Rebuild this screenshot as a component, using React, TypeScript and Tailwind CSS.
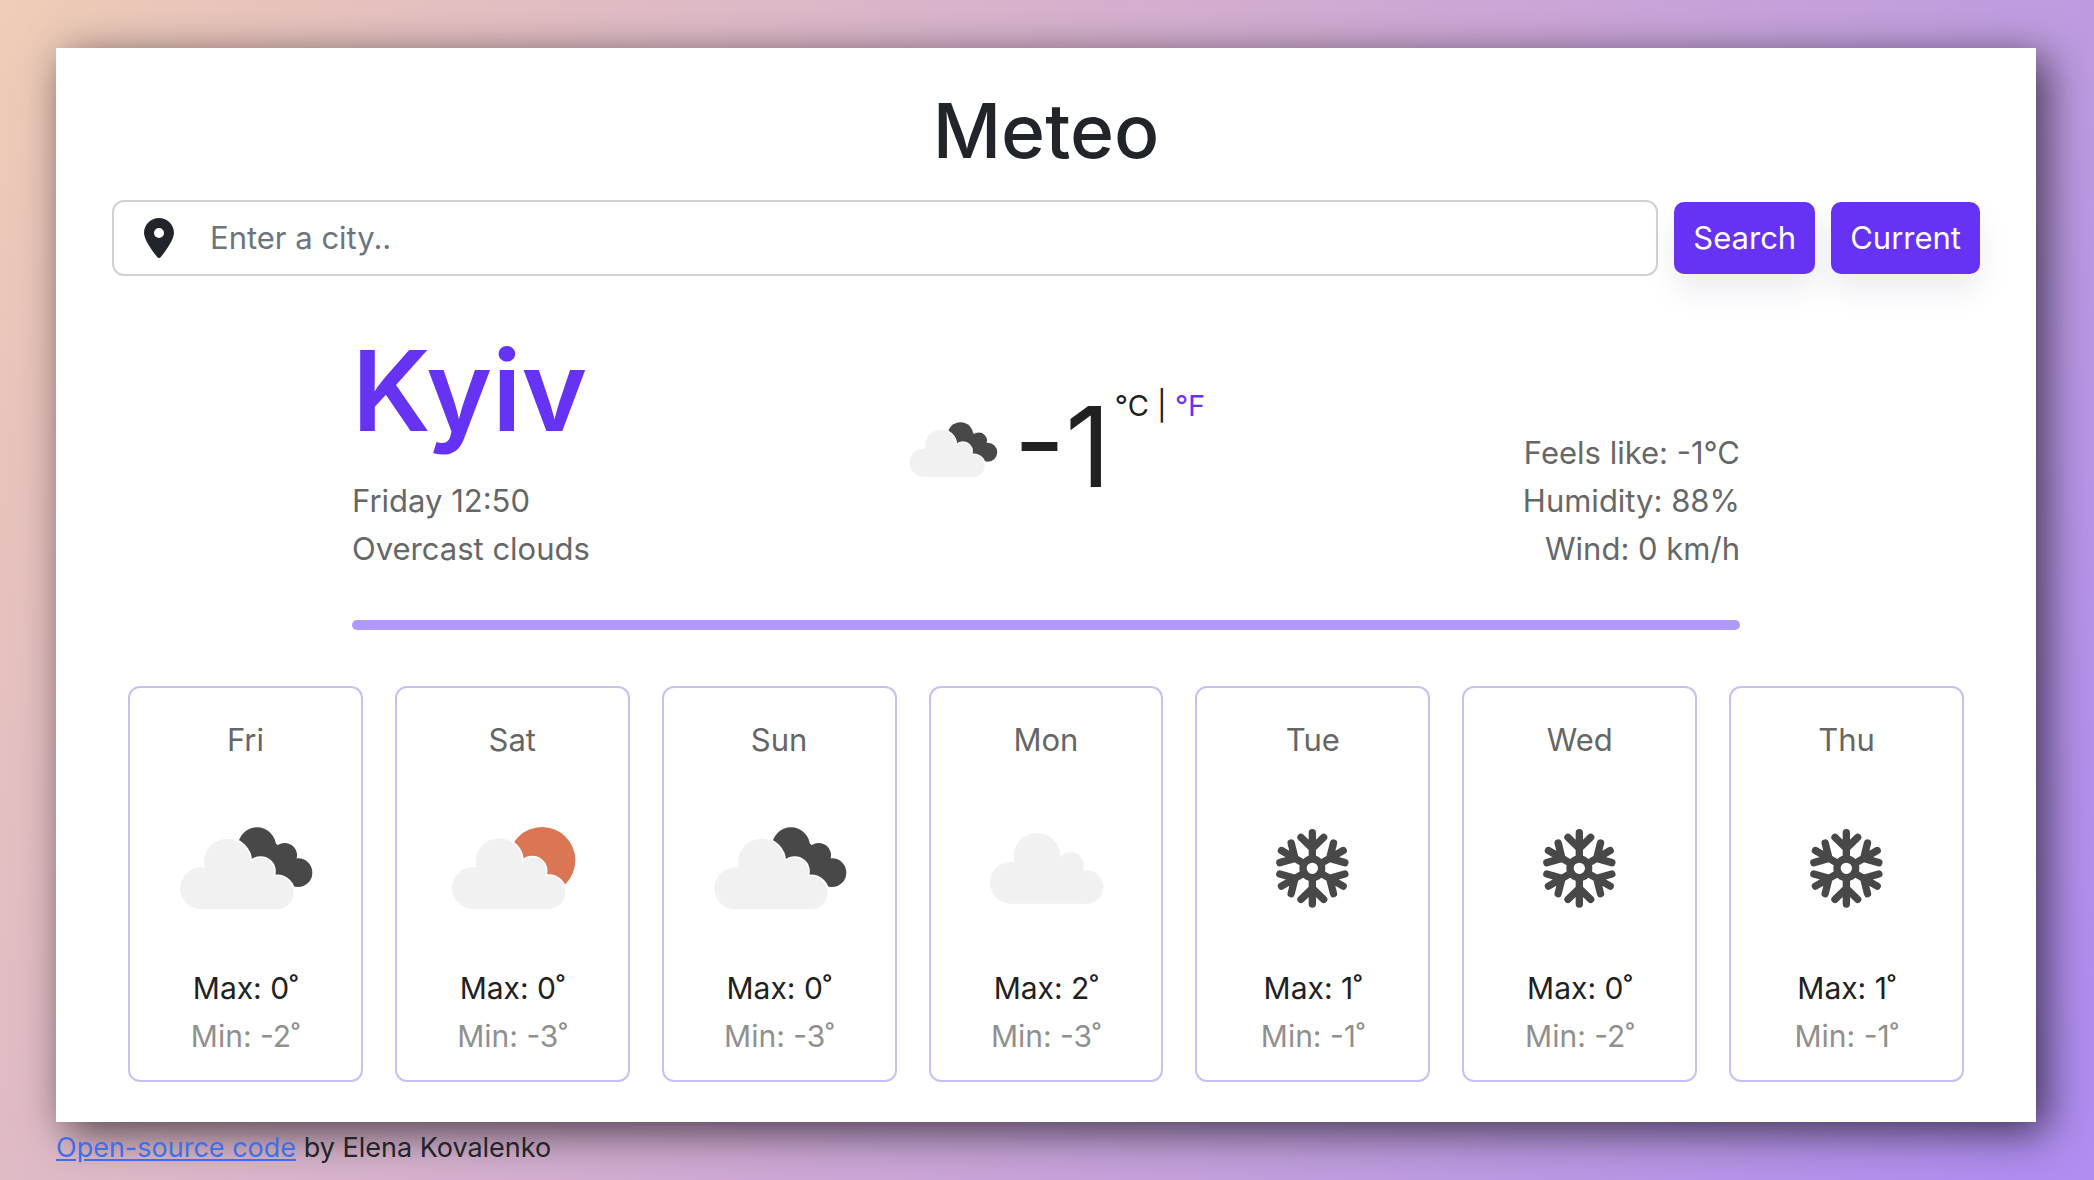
import { FaLocationDot } from "react-icons/fa6";

type Kind = "broken" | "sun" | "cloud" | "snow";

const forecast: { day: string; kind: Kind; max: number; min: number }[] = [
  { day: "Fri", kind: "broken", max: 0, min: -2 },
  { day: "Sat", kind: "sun", max: 0, min: -3 },
  { day: "Sun", kind: "broken", max: 0, min: -3 },
  { day: "Mon", kind: "cloud", max: 2, min: -3 },
  { day: "Tue", kind: "snow", max: 1, min: -1 },
  { day: "Wed", kind: "snow", max: 0, min: -2 },
  { day: "Thu", kind: "snow", max: 1, min: -1 },
];

const viewBoxes: Record<Kind, string> = {
  broken: "16 0 480 420",
  sun: "7 0 480 420",
  cloud: "-10 0 480 420",
  snow: "-20 0 480 420",
};

function CloudShape() {
  return (
    <>
      <circle cx="125" cy="265" r="63" />
      <circle cx="203" cy="186" r="70" />
      <circle cx="303" cy="214" r="41" />
      <circle cx="352" cy="278" r="50" />
      <path d="M125 328V220L203 186L303 210L352 240V328Z" />
    </>
  );
}

function Cloud() {
  return (
    <>
      <g fill="#fff" stroke="#fff" strokeWidth="9">
        <CloudShape />
      </g>
      <g fill="#f1f1f1">
        <CloudShape />
      </g>
    </>
  );
}

function WeatherIcon({ kind, className }: { kind: Kind; className: string }) {
  return (
    <svg viewBox={viewBoxes[kind]} className={className} aria-hidden="true">
      {kind === "broken" && (
        <>
          <g fill="#484849">
            <circle cx="292" cy="139" r="57" />
            <circle cx="375" cy="166" r="37" />
            <circle cx="415" cy="218" r="43" />
            <path d="M270 130L348 130L400 180L400 255L300 200Z" />
          </g>
          <Cloud />
        </>
      )}
      {kind === "sun" && (
        <>
          <circle cx="337" cy="181" r="100" fill="#db7655" />
          <g transform="translate(5 -1)">
            <Cloud />
          </g>
        </>
      )}
      {kind === "cloud" && (
        <g transform="translate(0 -17)">
          <Cloud />
        </g>
      )}
      {kind === "snow" && (
        <g transform="translate(218 205)" stroke="#484849" strokeWidth="22" strokeLinecap="round" fill="none">
          <circle r="28" />
          {[0, 60, 120, 180, 240, 300].map((a) => (
            <path key={a} d="M0 -30V-107M-34 -93L0 -60L34 -93" transform={`rotate(${a})`} />
          ))}
        </g>
      )}
    </svg>
  );
}

const buttonClass =
  "h-[72px] rounded-[10px] bg-[#6633f5] px-[19px] text-[31px] text-white shadow-[0_16px_32px_rgba(0,0,60,0.08)]";

export default function App() {
  return (
    <div className="min-h-screen bg-[linear-gradient(120deg,#efcdb6_0%,#e9c4bc_9%,#ddb9c8_28%,#cda7d6_54%,#be9be1_76%,#b08df0_97%)] pt-12 pr-[58px] pl-14 font-[Inter,sans-serif] text-[#212529]">
      <main className="bg-white px-14 pt-9 pb-10 shadow-[10px_10px_40px_rgba(0,0,0,0.65)]">
        <h1 className="text-center text-[75px] leading-[94px] font-medium">Meteo</h1>
        <form className="mt-[22px] flex items-center gap-4" onSubmit={(e) => e.preventDefault()}>
          <label className="flex h-[76px] grow items-center rounded-xl border-2 border-[#ced2d4] pl-[30px]">
            <FaLocationDot className="h-10 w-[30px] shrink-0" />
            <input
              type="search"
              aria-label="City"
              placeholder="Enter a city.."
              className="ml-9 min-w-0 grow bg-transparent text-[31px] outline-none placeholder:text-[#6c757d]"
            />
          </label>
          <button type="submit" className={buttonClass}>Search</button>
          <button type="button" className={buttonClass}>Current</button>
        </form>

        <section className="mx-60 mt-[52px] grid grid-cols-3 text-[31px] leading-[48px] text-[#666769]">
          <div>
            <h2 className="mb-[25px] text-[112px] leading-[124px] font-semibold text-[#6633f5]">Kyiv</h2>
            <p>Friday 12:50</p>
            <p>Overcast clouds</p>
          </div>
          <div className="flex items-start justify-center pt-[60px] pl-3 text-[#212121]">
            <WeatherIcon kind="broken" className="mt-4 h-[93px] w-[107px]" />
            <span className="ml-2 text-[112px] leading-[116px]">-1</span>
            <span className="ml-1 text-[29px] leading-[36px] whitespace-nowrap">
              °C | <a href="#fahrenheit" className="text-[#6633f5]">°F</a>
            </span>
          </div>
          <ul className="self-end text-right">
            <li>Feels like: -1°C</li>
            <li>Humidity: 88%</li>
            <li>Wind: 0 km/h</li>
          </ul>
        </section>
        <hr className="mx-60 mt-[47px] h-[10px] rounded-full border-0 bg-[#af99f9]" />

        <section className="mx-4 mt-14 grid grid-cols-7 gap-8">
          {forecast.map((f) => (
            <article key={f.day} className="flex flex-col items-center rounded-xl border-2 border-[#c9c0f2] pt-7 pb-5 text-[30px] leading-[48px]">
              <h3 className="text-[31px] text-[#666]">{f.day}</h3>
              <WeatherIcon kind={f.kind} className="mt-9 mb-6 h-[140px] w-[160px]" />
              <p className="text-[#212121]">Max: {f.max}˚</p>
              <p className="text-[#909090]">Min: {f.min}˚</p>
            </article>
          ))}
        </section>
      </main>
      <footer className="pt-1 pb-2 text-[27px] leading-[44px]">
        <a href="#source" className="text-[#3f6fe8] underline">Open-source code</a> by Elena Kovalenko
      </footer>
    </div>
  );
}
